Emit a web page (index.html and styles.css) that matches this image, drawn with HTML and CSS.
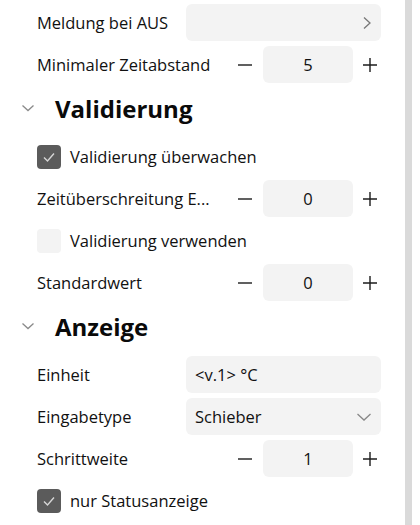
FILE: index.html
```html
<!DOCTYPE html>
<html lang="de">
<head>
    <meta charset="UTF-8">
    <meta name="viewport" content="width=device-width, initial-scale=1.0">
    <title>Eigenschaften</title>
    <link rel="stylesheet" href="styles.css">
</head>
<body>
    <div class="panel">
        <div class="props">
            <div class="row">
                <span class="label">Meldung bei AUS</span>
                <div class="field">
                    <span></span>
                    <svg class="chev" width="10" height="14" viewBox="0 0 10 14"><path d="M2 1.5 L8 7 L2 12.5" fill="none" stroke="#777" stroke-width="1.3"/></svg>
                </div>
            </div>
            <div class="row">
                <span class="label">Minimaler Zeitabstand</span>
                <div class="stepper">
                    <button class="step minus">
                        <svg width="16" height="16" viewBox="0 0 16 16"><path d="M1 8 H15" stroke="#1c1c1c" stroke-width="1.4"/></svg>
                    </button>
                    <div class="value">5</div>
                    <button class="step">
                        <svg width="16" height="16" viewBox="0 0 16 16"><path d="M1 8 H15 M8 1 V15" stroke="#1c1c1c" stroke-width="1.4"/></svg>
                    </button>
                </div>
            </div>

            <div class="section">
                <svg class="toggle" width="14" height="10" viewBox="0 0 14 10"><path d="M1.5 2.5 L7 7.5 L12.5 2.5" fill="none" stroke="#8a8a8a" stroke-width="1.3"/></svg>
                <h2>Validierung</h2>
            </div>

            <label class="row check">
                <span class="box on">
                    <svg width="16" height="16" viewBox="0 0 16 16"><path d="M3 8.5 L6.5 12 L13 4.5" fill="none" stroke="#d6d6d6" stroke-width="1.4"/></svg>
                </span>
                Validierung überwachen
            </label>
            <div class="row">
                <span class="label">Zeitüberschreitung E...</span>
                <div class="stepper">
                    <button class="step minus">
                        <svg width="16" height="16" viewBox="0 0 16 16"><path d="M1 8 H15" stroke="#1c1c1c" stroke-width="1.4"/></svg>
                    </button>
                    <div class="value">0</div>
                    <button class="step">
                        <svg width="16" height="16" viewBox="0 0 16 16"><path d="M1 8 H15 M8 1 V15" stroke="#1c1c1c" stroke-width="1.4"/></svg>
                    </button>
                </div>
            </div>
            <label class="row check">
                <span class="box"></span>
                Validierung verwenden
            </label>
            <div class="row">
                <span class="label">Standardwert</span>
                <div class="stepper">
                    <button class="step minus">
                        <svg width="16" height="16" viewBox="0 0 16 16"><path d="M1 8 H15" stroke="#1c1c1c" stroke-width="1.4"/></svg>
                    </button>
                    <div class="value">0</div>
                    <button class="step">
                        <svg width="16" height="16" viewBox="0 0 16 16"><path d="M1 8 H15 M8 1 V15" stroke="#1c1c1c" stroke-width="1.4"/></svg>
                    </button>
                </div>
            </div>

            <div class="section">
                <svg class="toggle" width="14" height="10" viewBox="0 0 14 10"><path d="M1.5 2.5 L7 7.5 L12.5 2.5" fill="none" stroke="#8a8a8a" stroke-width="1.3"/></svg>
                <h2>Anzeige</h2>
            </div>

            <div class="row">
                <span class="label">Einheit</span>
                <div class="field"><span>&lt;v.1&gt; °C</span></div>
            </div>
            <div class="row">
                <span class="label">Eingabetype</span>
                <div class="field">
                    <span>Schieber</span>
                    <svg class="chev" width="16" height="10" viewBox="0 0 16 10"><path d="M1.5 2 L8 8 L14.5 2" fill="none" stroke="#888" stroke-width="1.3"/></svg>
                </div>
            </div>
            <div class="row">
                <span class="label">Schrittweite</span>
                <div class="stepper">
                    <button class="step minus">
                        <svg width="16" height="16" viewBox="0 0 16 16"><path d="M1 8 H15" stroke="#1c1c1c" stroke-width="1.4"/></svg>
                    </button>
                    <div class="value">1</div>
                    <button class="step">
                        <svg width="16" height="16" viewBox="0 0 16 16"><path d="M1 8 H15 M8 1 V15" stroke="#1c1c1c" stroke-width="1.4"/></svg>
                    </button>
                </div>
            </div>
            <label class="row check">
                <span class="box on">
                    <svg width="16" height="16" viewBox="0 0 16 16"><path d="M3 8.5 L6.5 12 L13 4.5" fill="none" stroke="#d6d6d6" stroke-width="1.4"/></svg>
                </span>
                nur Statusanzeige
            </label>
        </div>
        <div class="scrollbar"><div class="thumb"></div></div>
    </div>
</body>
</html>
```

FILE: styles.css
```css
body {
    margin: 0;
    background-color: #fff;
    font-family: "Open Sans", "Noto Sans", sans-serif;
    font-size: 16.5px;
    color: #111;
}
.panel {
    display: flex;
    width: 420px;
    height: 525px;
    overflow: hidden;
}
.props {
    width: 344px;
    flex-shrink: 0;
    padding: 4px 0 0 37px;
    display: flex;
    flex-direction: column;
    gap: 5px;
}
.row {
    display: flex;
    align-items: center;
    height: 37px;
    flex-shrink: 0;
}
.label {
    width: 149px;
    flex-shrink: 0;
    white-space: nowrap;
}
.field {
    flex: 1;
    height: 37px;
    background-color: #f3f3f3;
    border-radius: 6px;
    display: flex;
    align-items: center;
    justify-content: space-between;
    padding: 0 5px 0 9px;
}
.chev {
    margin-right: 4px;
}
.stepper {
    flex: 1;
    display: flex;
    align-items: center;
}
.step {
    width: 34px;
    height: 37px;
    flex-shrink: 0;
    border: none;
    background: none;
    padding: 0;
    display: flex;
    align-items: center;
    justify-content: center;
    cursor: pointer;
}
.step.minus {
    margin-left: 41px;
    width: 36px;
}
.value {
    width: 90px;
    height: 37px;
    flex-shrink: 0;
    background-color: #f3f3f3;
    border-radius: 6px;
    display: flex;
    align-items: center;
    justify-content: center;
}
.section {
    display: flex;
    align-items: center;
    height: 40px;
    margin-left: -16px;
    margin-bottom: 5px;
    flex-shrink: 0;
}
.toggle {
    margin-right: 20px;
}
.section h2 {
    margin: 0;
    font-size: 24px;
    font-weight: 700;
    color: #0a0a0a;
}
.check {
    gap: 9px;
}
.box {
    width: 24px;
    height: 24px;
    border-radius: 4px;
    background-color: #f3f3f3;
    display: flex;
    align-items: center;
    justify-content: center;
}
.box.on {
    background-color: #5b5b5b;
}
.scrollbar {
    margin-left: 24px;
    width: 15px;
    flex-shrink: 0;
    border-right: 1px solid #efefef;
}
.thumb {
    width: 7px;
    height: 100%;
    background-color: #dadada;
}
```
